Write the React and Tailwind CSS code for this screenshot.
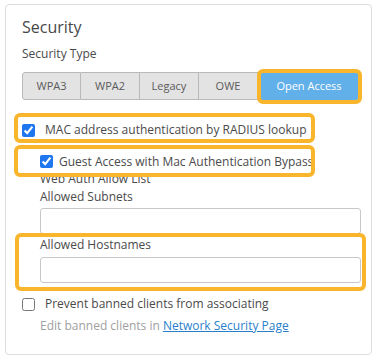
export default function App() {
  const tabs = ["WPA3", "WPA2", "Legacy", "OWE"];

  return (
    <div className="min-h-screen bg-white pt-[4px] pl-[5px] font-['Open_Sans',sans-serif] text-[#4a4a4a]">
      <div className="relative h-[351px] w-[367px] rounded-[4px] border border-[#dddddd] pl-[16px] pt-[10px]">
        <h2 className="text-[16px] leading-[24px] text-[#484848]">Security</h2>
        <div className="mt-[6px] text-[12px] leading-[18px] text-[#4a4a4a]">Security Type</div>

        {/* segmented control */}
        <div className="mt-[9px] flex h-[28px] text-[11px]">
          {tabs.map((t, i) => (
            <button
              key={t}
              type="button"
              className={
                "h-full w-[59px] border-y border-r border-[#b9b9b9] bg-[#e3e3e3] text-[#5a5a5a] " +
                (i === 0 ? "rounded-l-[3px] border-l" : "")
              }
            >
              {t}
            </button>
          ))}
          <button type="button" className="h-full w-[102px] bg-[#62b0ea] text-white">
            Open Access
          </button>
        </div>

        {/* MAC auth */}
        <label className="mt-[21px] flex h-[18px] items-center text-[12px] leading-[18px]">
          <input type="checkbox" defaultChecked className="m-0 h-[13px] w-[13px] accent-[#1f77f0]" />
          <span className="ml-[10px]">MAC address authentication by RADIUS lookup</span>
        </label>

        <label className="mt-[14px] ml-[18px] flex h-[17px] w-[272px] items-center overflow-hidden whitespace-nowrap text-[12px] leading-[18px]">
          <input type="checkbox" defaultChecked className="m-0 h-[13px] w-[13px] shrink-0 accent-[#1f77f0]" />
          <span className="ml-[6px]">Guest Access with Mac Authentication Bypass</span>
        </label>

        <div className="ml-[18px] w-[321px] text-[12px] leading-[18px]">
          <div>Web Auth Allow List</div>
          <div>Allowed Subnets</div>
          <input
            type="text"
            className="mt-[2px] block h-[26px] w-full rounded-[3px] border border-[#c8c8c8] bg-white"
          />
          <div className="mt-[2px]">Allowed Hostnames</div>
          <input
            type="text"
            className="mt-[3px] block h-[26px] w-full rounded-[3px] border border-[#c8c8c8] bg-white"
          />
        </div>

        <label className="mt-[12px] flex h-[18px] items-center text-[12px] leading-[18px]">
          <input type="checkbox" className="m-0 h-[13px] w-[13px] accent-[#1f77f0]" />
          <span className="ml-[10px]">Prevent banned clients from associating</span>
        </label>
        <div className="mt-[4px] ml-[18px] text-[12px] leading-[18px] text-[#a0a0a0]">
          Edit banned clients in{" "}
          <a href="#" className="text-[#2a7fcc] underline">
            Network Security Page
          </a>
        </div>

        {/* highlight annotations */}
        <div className="pointer-events-none absolute left-[251px] top-[64px] h-[35px] w-[105px] rounded-[6px] border-4 border-[#f9b62d]" />
        <div className="pointer-events-none absolute left-[8px] top-[108px] h-[30px] w-[301px] rounded-[6px] border-4 border-[#f9b62d]" />
        <div className="pointer-events-none absolute left-[8px] top-[140px] h-[32px] w-[301px] rounded-[6px] border-4 border-[#f9b62d]" />
        <div className="pointer-events-none absolute left-[9px] top-[228px] h-[58px] w-[351px] rounded-[6px] border-4 border-[#f9b62d]" />
      </div>
    </div>
  );
}
